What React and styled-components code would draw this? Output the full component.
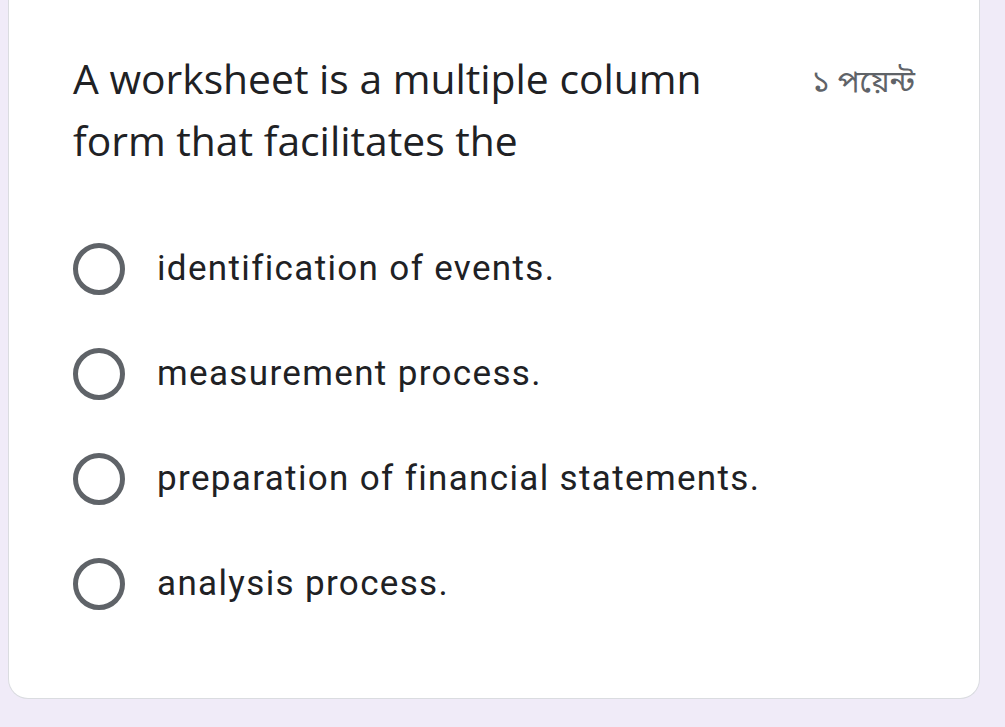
import React from "react";
import styled, { createGlobalStyle } from "styled-components";

const GlobalStyle = createGlobalStyle`
  html, body {
    margin: 0;
    padding: 0;
    background: #f0ebf8;
  }
`;

const Page = styled.div`
  width: 1005px;
  height: 727px;
  box-sizing: border-box;
  padding: 0 25px 0 8px;
  background: #f0ebf8;
  overflow: hidden;
`;

const Card = styled.div`
  background: #fff;
  border: 1px solid #dadce0;
  border-top: none;
  border-radius: 0 0 20px 20px;
  padding: 47px 64px 64px 64px;
  height: 699px;
  box-sizing: border-box;
`;

const Header = styled.div`
  display: flex;
  align-items: flex-start;
  justify-content: space-between;
  margin-bottom: 45px;
`;

const Title = styled.div`
  width: 670px;
  font-family: "Open Sans", "Lato", sans-serif;
  font-size: 40.8px;
  line-height: 62px;
  color: #202124;
`;

const Points = styled.div`
  margin-top: 6px;
  font-family: "Noto Sans Bengali", "Noto Sans", sans-serif;
  font-size: 30.5px;
  line-height: 62px;
  color: #5f6368;
  white-space: nowrap;
`;

const Options = styled.div`
  display: flex;
  flex-direction: column;
`;

const Option = styled.label`
  display: flex;
  align-items: center;
  height: 105px;
  gap: 32px;
`;

const Radio = styled.span`
  width: 52px;
  height: 52px;
  box-sizing: border-box;
  border: 5px solid #5f6368;
  border-radius: 50%;
  flex-shrink: 0;
`;

const OptionText = styled.span`
  font-family: Roboto, "Liberation Sans", sans-serif;
  font-size: 35px;
  color: #202124;
  letter-spacing: 1.35px;
`;

const options = [
  "identification of events.",
  "measurement process.",
  "preparation of financial statements.",
  "analysis process.",
];

export default function App() {
  return (
    <>
      <GlobalStyle />
      <Page>
        <Card>
          <Header>
            <Title>A worksheet is a multiple column form that facilitates the</Title>
            <Points>১ পয়েন্ট</Points>
          </Header>
          <Options>
            {options.map((o) => (
              <Option key={o}>
                <Radio />
                <OptionText>{o}</OptionText>
              </Option>
            ))}
          </Options>
        </Card>
      </Page>
    </>
  );
}
